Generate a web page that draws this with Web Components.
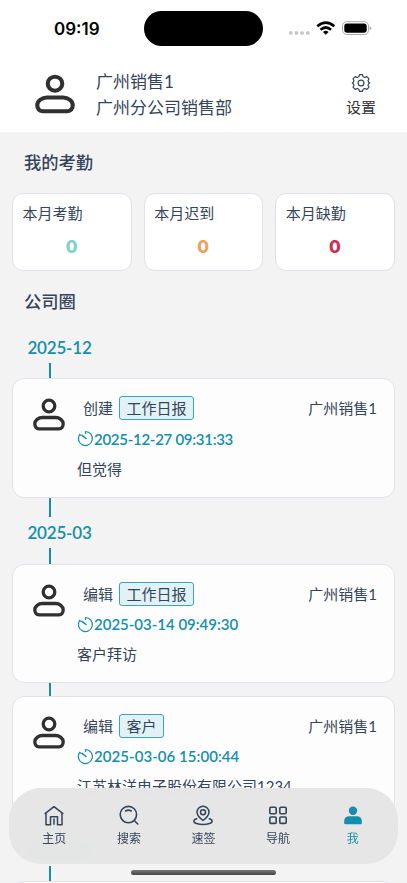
<!DOCTYPE html>
<html lang="zh-CN">
<head>
<meta charset="utf-8">
<title>我</title>
<style>
html,body{margin:0;height:100%;overflow:hidden}
body{background:#f3f3f3;color:#34445a;font:400 15px/20px Lato,"Noto Sans CJK SC",sans-serif}
</style>
</head>
<body>
<mobile-app></mobile-app>
<script>
const define=(name,css,html)=>customElements.define(name,class extends HTMLElement{
  constructor(){
    super();
    const root=this.attachShadow({mode:'open'});
    root.innerHTML=`<style>*{box-sizing:border-box}:host{box-sizing:border-box}${css}</style>${html}`;
  }
});

define('user-avatar',`:host{display:block;width:32px;height:34px;color:#303030}svg{display:block;width:100%;height:100%}`,
`<svg viewBox="0 0 32 34" preserveAspectRatio="none" fill="none" stroke="currentColor" stroke-width="3.300"><circle cx="16" cy="8" r="5.800"/><path d="M9.500 19.500h13c4 0 7.700 2.800 7.700 6.300 0 2.800-1.600 5-4.200 5H6c-2.600 0-4.200-2.200-4.200-5 0-3.500 3.700-6.300 7.700-6.300Z"/></svg>`);

define('status-bar',`:host{display:flex;height:57px;padding-right:35px;align-items:center}
.time{width:144px;padding-left:54px;font:600 17px/20px Inter,sans-serif;letter-spacing:0;color:#000}
.island{width:119px;height:35px;border-radius:18px;background:#000}
.right{display:flex;margin-left:auto;align-items:center;height:20px}svg{display:block}`,
`<div class="time">09:19</div><div class="island"></div><div class="right">
<svg width="84" height="20" viewBox="0 0 84 20"><g fill="#c5c5c7"><rect x="1" y="12.200" width="3.500" height="3.500" rx="1.300"/><rect x="6.700" y="12.200" width="3.500" height="3.500" rx="1.300"/><rect x="12.300" y="12.200" width="3.500" height="3.500" rx="1.300"/><rect x="18" y="12.200" width="3.500" height="3.500" rx="1.300"/></g>
<g fill="none" stroke="#000" stroke-width="2.700"><path d="M29.300 7.300q8.500-7.200 17 0"/><path d="M32.500 10.700q5.300-4.400 10.600 0"/></g><path d="M35 13q2.800-2.300 5.600 0L37.800 15.800Z"/>
<rect x="54.500" y="2.700" width="26" height="12.800" rx="4.200" fill="none" stroke="#aaa" stroke-width="1"/><rect x="56.300" y="4.500" width="22.400" height="9.200" rx="2.700"/><path d="M81.700 7.200v4q1.600-.4 1.600-2t-1.600-2" fill="#aaa"/></svg></div>`);

define('profile-header',`:host{display:block;height:132px;background:#fff}
.row{display:flex;padding:12px 31px 0 35px;height:75px}
user-avatar{width:40px;height:41px;margin-top:5px}
.info{margin-left:21px;font-size:17px;line-height:25.500px;color:#34445a}
.set{margin-left:auto;display:flex;flex-direction:column;align-items:center;color:#333;line-height:20px;padding-top:4px}
svg{width:20px;height:20px;margin-bottom:4px;color:#34445a}`,
`<status-bar></status-bar><div class="row"><user-avatar></user-avatar><div class="info"><div>广州销售1</div><div>广州分公司销售部</div></div>
<div class="set"><svg viewBox="0 0 20 20" fill="none" stroke="currentColor" stroke-width="1.200" stroke-linejoin="round"><circle cx="10" cy="10" r="2.900"/><path d="M8.500 1.700h3l.7 2.100 1.600.7 2-.9 2.100 2.100-.9 2 .7 1.600 1 .7-1 .7-.7 1.600.9 2-2.100 2.100-2-.9-1.600.7-.7 2.100h-3l-.7-2.100-1.600-.7-2 .9-2.100-2.100.9-2-.7-1.600-1-.7 1-.7.7-1.600-.9-2 2.100-2.100 2 .9 1.600-.7Z"/></svg><span>设置</span></div></div>`);

define('section-title',`:host{display:block;font-size:17.300px;font-weight:500;line-height:26px;padding-left:24px;color:#34445a}`,`<slot></slot>`);

define('stat-card',`:host{display:block;height:78px;background:#fff;border:1px solid #e0e2ea;border-radius:11px;padding:9px 10px 9px 9.500px}
.label,.value{display:block}.value{text-align:center;font:800 17px/22px Inter,sans-serif;margin-top:13px;color:var(--value)}`,
`<span class="label"><slot></slot></span><span class="value"><slot name="value"></slot></span>`);

define('timeline-month',`:host{display:block;color:#138eac;font-weight:600;font-size:17px;line-height:31px;height:31px}
span{display:block;width:119px;text-align:center;letter-spacing:-.2px}`,`<span><slot></slot></span>`);

define('timeline-line',`:host{display:block;width:2px;margin-left:49px;background:#138eac}`,``);

define('activity-card',`:host{display:flex;height:119.500px;margin:0 12px;background:#fdfdfd;border:1px solid #e0e2ea;border-radius:12px;padding:17px 17px 0 20px}
user-avatar{flex:none;margin-top:2px}.body{flex:1;margin-left:12px;min-width:0}
.top{display:flex;align-items:center;height:24px;padding-left:6px;white-space:nowrap}
.tag{margin-left:6px;height:24px;line-height:22px;padding:0 6.500px;border:1px solid #38a5ba;border-radius:3px;background:#e1f2f6}
.user{margin-left:auto}.date{display:flex;align-items:center;height:20px;margin-top:8.500px;color:#138eac;font-weight:600;white-space:nowrap}
.date span{letter-spacing:var(--track,0)}
svg{width:17px;height:17px;flex:none}.text{margin-top:10px;white-space:nowrap}`,
`<user-avatar></user-avatar><div class="body"><div class="top"><slot name="action"></slot><span class="tag"><slot name="tag"></slot></span><span class="user">广州销售1</span></div>
<div class="date"><svg viewBox="0 0 17 17" fill="none" stroke="currentColor" stroke-width="1.200" stroke-linecap="round"><path d="M8.500 1.500A7 7 0 1 1 2.700 4.400M8.500 1.500v2M2.700 4.400l1.200.8"/><path d="M5 5.300l4 3.200" stroke-width="1.600"/></svg><span><slot name="date"></slot></span></div>
<div class="text"><slot></slot></div></div>`);

define('nav-item',`:host{display:flex;flex:1;flex-direction:column;align-items:center;font-size:12px;line-height:16px;color:#34445a}
:host([active]){color:#138eac}::slotted(svg){display:block;width:22px;height:22px;margin-bottom:5px}`,`<slot name="icon"></slot><slot></slot>`);

define('tab-bar',`:host{position:absolute;left:9px;right:9px;top:788px;height:75.500px;border-radius:32px;background:rgba(229,229,229,.96);backdrop-filter:blur(7px);display:flex;padding:16px 8px 0}
`,`
<nav-item><svg slot="icon" viewBox="0 0 22 22" fill="none" stroke="currentColor" stroke-width="1.500" stroke-linejoin="round"><path d="M1.700 9.800 11 2.700l9.300 7.100M3 9v11.700h4.500v-8h7v8H19V9M11 14.500v6.300"/></svg>主页</nav-item>
<nav-item><svg slot="icon" viewBox="0 0 22 22" fill="none" stroke="currentColor" stroke-width="1.600" stroke-linecap="round"><circle cx="10.400" cy="10.600" r="8.200"/><path d="m16.300 16.500 3.500 3.500M7.600 7q2.800-1.700 5.600 0"/></svg>搜索</nav-item>
<nav-item><svg slot="icon" viewBox="0 0 22 22" fill="none" stroke="currentColor" stroke-width="1.500" stroke-linecap="round" stroke-linejoin="round"><path d="M11 16.500c-3-2.300-6-5-6-8.300a6 6 0 0 1 12 0c0 3.300-3 6-6 8.300Z"/><circle cx="11" cy="8.200" r="2.500"/><path d="M4.700 14.700C.8 16 1 18.500 4.500 19.500c4 1.100 9 1.100 13 0 3.500-1 3.700-3.500-.2-4.800"/></svg>速签</nav-item>
<nav-item><svg slot="icon" viewBox="0 0 22 22" fill="none" stroke="currentColor" stroke-width="1.600"><rect x="2.800" y="3.300" width="6.400" height="6.400" rx="1.200"/><rect x="12.800" y="3.300" width="6.400" height="6.400" rx="1.200"/><rect x="2.800" y="13" width="6.400" height="6.400" rx="1.200"/><rect x="12.800" y="13" width="6.400" height="6.400" rx="1.200"/></svg>导航</nav-item>
<nav-item active><svg slot="icon" viewBox="0 0 22 22" fill="currentColor"><circle cx="11" cy="6.700" r="4.200"/><path d="M7.500 12.200h7c3.500 0 5.300 2 5.300 4.700v2q0 1.300-1.300 1.300h-15q-1.300 0-1.300-1.300v-2c0-2.700 1.800-4.700 5.300-4.700Z"/></svg>我</nav-item>`);

define('mobile-app',`:host{display:block;position:relative;height:883px;overflow:hidden;background:#f3f3f3}
.my{padding-top:18px}.stats{display:grid;grid-template-columns:repeat(3,1fr);gap:12px;padding:0 12px;margin-top:17px}
.circle{padding-top:18px}timeline-month.first{margin-top:16.500px}
.before{height:15.500px}.after{height:19.500px}.gap{height:12.500px}
.space{height:31px}.smudge{width:64px;height:13px;margin:9px 0 9px 27px;background:#138eac;opacity:.3}
.next{height:119px;margin:0 12px;border:1px solid #e0e2ea;border-radius:12px;background:#fdfdfd}
.home{position:absolute;left:131px;top:870px;width:145px;height:5px;border-radius:3px;background:linear-gradient(#777,#444)}`,
`<profile-header></profile-header>
<section-title class="my">我的考勤</section-title>
<div class="stats"><stat-card style="--value:#7dd2ca">本月考勤<span slot="value">0</span></stat-card><stat-card style="--value:#eba25f">本月迟到<span slot="value">0</span></stat-card><stat-card style="--value:#d12e4f">本月缺勤<span slot="value">0</span></stat-card></div>
<section-title class="circle">公司圈</section-title>
<timeline-month class="first">2025-12</timeline-month><timeline-line class="before"></timeline-line>
<activity-card style="--track:-.28px"><span slot="action">创建</span><span slot="tag">工作日报</span><span slot="date">2025-12-27 09:31:33</span>但觉得</activity-card>
<timeline-line class="after"></timeline-line><timeline-month>2025-03</timeline-month><timeline-line class="before"></timeline-line>
<activity-card style="--track:-.01px"><span slot="action">编辑</span><span slot="tag">工作日报</span><span slot="date">2025-03-14 09:49:30</span>客户拜访</activity-card>
<timeline-line class="gap"></timeline-line>
<activity-card style="--track:.05px"><span slot="action">编辑</span><span slot="tag">客户</span><span slot="date">2025-03-06 15:00:44</span>江苏林洋电子股份有限公司1234</activity-card>
<timeline-line class="after"></timeline-line><div class="smudge"></div><timeline-line class="before"></timeline-line>
<div class="next"></div>
<tab-bar></tab-bar><div class="home"></div>`);
</script>
</body>
</html>
